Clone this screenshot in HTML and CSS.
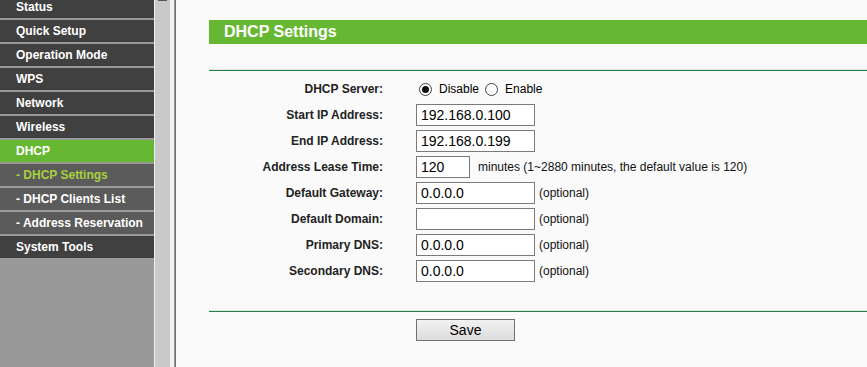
FILE: index.html
```html
<!DOCTYPE html>
<html lang="en">
<head>
    <meta charset="UTF-8">
    <title>DHCP Settings</title>
    <link rel="stylesheet" href="styles.css">
</head>
<body>
    <div class="sidebar">
        <div class="menu">
            <a class="menu-item">Status</a>
            <a class="menu-item">Quick Setup</a>
            <a class="menu-item">Operation Mode</a>
            <a class="menu-item">WPS</a>
            <a class="menu-item">Network</a>
            <a class="menu-item">Wireless</a>
            <a class="menu-item active">DHCP</a>
            <a class="menu-item sub current">- DHCP Settings</a>
            <a class="menu-item sub">- DHCP Clients List</a>
            <a class="menu-item sub">- Address Reservation</a>
            <a class="menu-item">System Tools</a>
        </div>
    </div>
    <div class="scrollbar"><span class="arrow"></span></div>
    <div class="frame-edge"></div>

    <div class="main">
        <div class="title-bar">DHCP Settings</div>
        <div class="rule"></div>

        <div class="form">
            <div class="label">DHCP Server:</div>
            <div class="field">
                <span class="radio checked"></span><span class="radio-text">Disable</span>
                <span class="radio"></span><span class="radio-text">Enable</span>
            </div>

            <div class="label">Start IP Address:</div>
            <div class="field"><input type="text" class="box" value="192.168.0.100"></div>

            <div class="label">End IP Address:</div>
            <div class="field"><input type="text" class="box" value="192.168.0.199"></div>

            <div class="label">Address Lease Time:</div>
            <div class="field"><input type="text" class="box short" value="120"><span class="hint wide">minutes (1~2880 minutes, the default value is 120)</span></div>

            <div class="label">Default Gateway:</div>
            <div class="field"><input type="text" class="box" value="0.0.0.0"><span class="hint">(optional)</span></div>

            <div class="label">Default Domain:</div>
            <div class="field"><input type="text" class="box" value=""><span class="hint">(optional)</span></div>

            <div class="label">Primary DNS:</div>
            <div class="field"><input type="text" class="box" value="0.0.0.0"><span class="hint">(optional)</span></div>

            <div class="label">Secondary DNS:</div>
            <div class="field"><input type="text" class="box" value="0.0.0.0"><span class="hint">(optional)</span></div>
        </div>

        <div class="rule bottom"></div>
        <div class="actions">
            <button class="save">Save</button>
        </div>
    </div>
</body>
</html>
```

FILE: styles.css
```css
body {
    margin: 0;
    padding: 0;
    display: flex;
    height: 367px;
    overflow: hidden;
    font-family: "Liberation Sans", Arial, sans-serif;
    background-color: #fafafa;
    color: #000;
}

/* left frame */
.sidebar {
    width: 154px;
    flex-shrink: 0;
    background-color: #999999;
    overflow: hidden;
}

.menu {
    margin-top: -4px;
}

.menu-item {
    display: block;
    height: 22px;
    line-height: 22px;
    margin-bottom: 2px;
    padding-left: 16px;
    background-color: #404040;
    color: #fff;
    font-size: 12px;
    font-weight: bold;
    text-decoration: none;
    white-space: nowrap;
}

.menu-item.active {
    background-color: #66b832;
}

.menu-item.sub {
    background-color: #5b5b5b;
}

.menu-item.current {
    color: #a8d03c;
}

.scrollbar {
    width: 15px;
    flex-shrink: 0;
    border-left: 1px solid #f0f0f0;
    background-color: #c9c9c9;
    position: relative;
}

.scrollbar .arrow {
    position: absolute;
    top: 0;
    left: 3px;
    width: 9px;
    height: 2px;
    border-top: 1px solid #555;
}

.frame-edge {
    width: 6px;
    flex-shrink: 0;
    background: linear-gradient(to right, #f2f2f2 0, #f2f2f2 4px, #9a9a9a 4px, #9a9a9a 5px, #6e6e6e 5px);
}

/* content */
.main {
    flex-grow: 1;
    padding-left: 33px;
}

.title-bar {
    margin-top: 20px;
    height: 24px;
    line-height: 24px;
    padding-left: 15px;
    background-color: #66b832;
    color: #fff;
    font-size: 16px;
    font-weight: bold;
}

.rule {
    margin-top: 25px;
    height: 1px;
    border-top: 1px solid #dfe8e2;
    background-color: #237b4e;
}

.form {
    display: grid;
    grid-template-columns: 174px 1fr;
    grid-auto-rows: 26px;
    column-gap: 33px;
    padding-top: 5px;
}

.label {
    text-align: right;
    font-size: 12px;
    font-weight: bold;
    line-height: 26px;
    color: #222;
}

.field {
    display: flex;
    align-items: center;
    font-size: 12px;
}

.box {
    box-sizing: border-box;
    width: 119px;
    height: 22px;
    margin: 0;
    padding: 0 0 0 4px;
    border: 1px solid #7a7a7a;
    background-color: #fff;
    font-family: "Liberation Sans", Arial, sans-serif;
    font-size: 14px;
    color: #000;
}

.box.short {
    width: 54px;
}

.hint {
    margin-left: 4px;
    color: #111;
}

.hint.wide {
    margin-left: 8px;
}

.radio {
    box-sizing: border-box;
    width: 13px;
    height: 13px;
    margin-left: 3px;
    border: 1px solid #444;
    border-radius: 50%;
    background-color: #fff;
    display: flex;
    align-items: center;
    justify-content: center;
}

.radio.checked::after {
    content: "";
    width: 7px;
    height: 7px;
    border-radius: 50%;
    background-color: #111;
}

.radio-text {
    margin-left: 7px;
    margin-right: 3px;
    font-size: 12px;
}

.rule.bottom {
    margin-top: 26px;
}

.actions {
    padding: 7px 0 0 207px;
}

.save {
    width: 99px;
    height: 22px;
    padding: 0;
    border: 1px solid #707070;
    background: linear-gradient(#f2f2f2, #dcdcdc);
    font-family: "Liberation Sans", Arial, sans-serif;
    font-size: 14px;
    color: #000;
}
```
